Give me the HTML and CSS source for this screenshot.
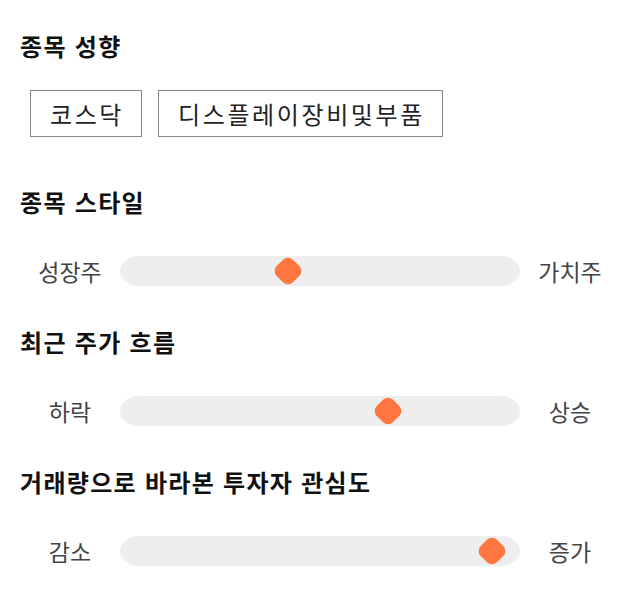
FILE: index.html
```html
<!DOCTYPE html>
<html lang="ko">
<head>
    <meta charset="UTF-8">
    <meta name="viewport" content="width=device-width, initial-scale=1.0">
    <title>종목 성향</title>
    <link rel="stylesheet" href="styles.css">
</head>
<body>
    <div class="page">
        <section class="section">
            <h2>종목 성향</h2>
            <div class="chips">
                <span class="chip">코스닥</span>
                <span class="chip">디스플레이장비및부품</span>
            </div>
        </section>

        <section class="section">
            <h2>종목 스타일</h2>
            <div class="slider">
                <span class="slider-label">성장주</span>
                <div class="track">
                    <span class="thumb" style="left: 42%"></span>
                </div>
                <span class="slider-label">가치주</span>
            </div>
        </section>

        <section class="section">
            <h2>최근 주가 흐름</h2>
            <div class="slider">
                <span class="slider-label">하락</span>
                <div class="track">
                    <span class="thumb" style="left: 67%"></span>
                </div>
                <span class="slider-label">상승</span>
            </div>
        </section>

        <section class="section">
            <h2>거래량으로 바라본 투자자 관심도</h2>
            <div class="slider">
                <span class="slider-label">감소</span>
                <div class="track">
                    <span class="thumb" style="left: 93%"></span>
                </div>
                <span class="slider-label">증가</span>
            </div>
        </section>
    </div>
</body>
</html>
```

FILE: styles.css
```css
body {
    margin: 0;
    font-family: "Noto Sans CJK KR", "Noto Sans", sans-serif;
    background: #fff;
    color: #111;
}
.page {
    padding: 30px 20px;
}
.section + .section {
    margin-top: 40px;
}
.section h2 {
    margin: 0;
    font-size: 24px;
    line-height: 32px;
    font-weight: 700;
    letter-spacing: 1.3px;
    color: #111;
}
.chips {
    display: flex;
    gap: 16px;
    padding: 28px 10px 9px;
}
.chip {
    display: flex;
    align-items: center;
    height: 47px;
    box-sizing: border-box;
    padding: 0 17px 0 19px;
    border: 1px solid #888;
    font-size: 24px;
    letter-spacing: 2.6px;
    color: #222;
}
.slider {
    display: flex;
    align-items: center;
    margin-top: 38px;
    height: 30px;
}
.slider-label {
    width: 100px;
    text-align: center;
    font-size: 23px;
    color: #444;
}
.track {
    position: relative;
    flex: 1;
    height: 30px;
    background: #eee;
    border-radius: 18px / 15px;
}
.thumb {
    position: absolute;
    top: 50%;
    width: 23px;
    height: 23px;
    background: #ff7640;
    border-radius: 7px;
    transform: translate(-50%, -50%) rotate(45deg);
}
```
